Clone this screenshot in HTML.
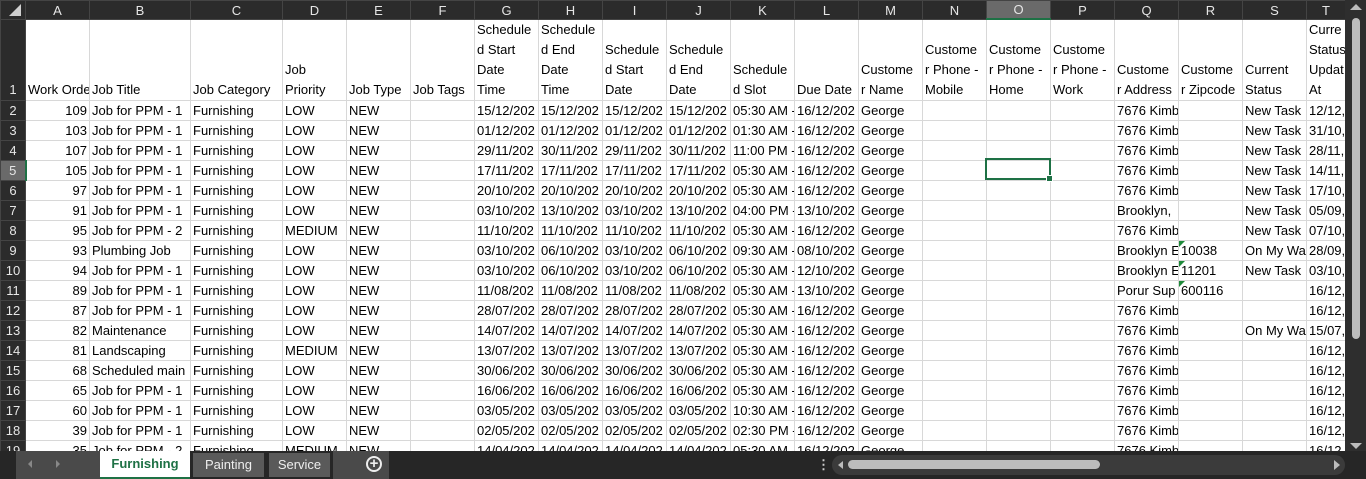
<!DOCTYPE html>
<html><head><meta charset="utf-8"><style>
*{margin:0;padding:0;box-sizing:border-box}
body{width:1366px;height:479px;overflow:hidden;background:#262626;font-family:"Liberation Sans",sans-serif;position:relative}
#grid{position:absolute;left:0;top:0;width:1345px;height:451px;overflow:hidden;background:#fff}
table{border-collapse:collapse;table-layout:fixed;width:1345px}
td{border:1px solid #d8d8d8;height:20px;font-size:13px;line-height:19px;white-space:nowrap;overflow:hidden;padding:0 2px;color:#000;vertical-align:bottom;text-overflow:clip}
td.n{text-align:right}
tr.h td{background:#2b2b2b;color:#e6e6e6;text-align:center;border:1px solid #444;height:18px;line-height:17px;font-size:13px}
td.r{background:#2b2b2b;color:#e6e6e6;text-align:center;border-color:#444;padding:0}
td.sel{background:#6a6a6a!important;}
tr.h td.sel{border-bottom:2px solid #1e7145}
td.r.sel{border-right:2px solid #1e7145}
tr.t td{height:79px;white-space:normal;line-height:20px;vertical-align:bottom}
.g{position:relative}
.g::before{content:"";position:absolute;left:0;top:0;border-top:6px solid #1e8a3a;border-right:6px solid transparent}
#cur{position:absolute;left:985px;top:158px;width:66px;height:22px;border:2px solid #1e7145}
#cur::after{content:"";position:absolute;right:-4px;bottom:-4px;width:5px;height:5px;background:#1e7145;border:1px solid #fff}
#vs{position:absolute;left:1345px;top:0;width:21px;height:451px;background:#2e2e2e}
#vs .th{position:absolute;left:7px;top:18px;width:8px;height:321px;background:#bcbcbc;border-radius:4px}
#bar{position:absolute;left:0;top:451px;width:1366px;height:28px;background:#262626}
</style></head><body>
<div id="grid"><table>
<colgroup><col style="width:25px"><col style="width:64px"><col style="width:101px"><col style="width:92px"><col style="width:64px"><col style="width:64px"><col style="width:64px"><col style="width:64px"><col style="width:64px"><col style="width:64px"><col style="width:64px"><col style="width:64px"><col style="width:64px"><col style="width:64px"><col style="width:64px"><col style="width:64px"><col style="width:64px"><col style="width:64px"><col style="width:64px"><col style="width:64px"><col style="width:39px"></colgroup>
<tr class="h"><td style="position:relative"><svg width="14" height="14" style="position:absolute;right:3px;bottom:2px"><polygon points="13,1 13,13 1,13" fill="#d0d0d0"/></svg></td><td>A</td><td>B</td><td>C</td><td>D</td><td>E</td><td>F</td><td>G</td><td>H</td><td>I</td><td>J</td><td>K</td><td>L</td><td>M</td><td>N</td><td class="sel">O</td><td>P</td><td>Q</td><td>R</td><td>S</td><td>T</td></tr>
<tr class="t"><td class="r">1</td><td style="white-space:nowrap">Work Order</td><td>Job Title</td><td>Job Category</td><td>Job<br>Priority</td><td>Job Type</td><td>Job Tags</td><td>Schedule<br>d Start<br>Date<br>Time</td><td>Schedule<br>d End<br>Date<br>Time</td><td>Schedule<br>d Start<br>Date</td><td>Schedule<br>d End<br>Date</td><td>Schedule<br>d Slot</td><td>Due Date</td><td>Custome<br>r Name</td><td>Custome<br>r Phone -<br>Mobile</td><td>Custome<br>r Phone -<br>Home</td><td>Custome<br>r Phone -<br>Work</td><td>Custome<br>r Address</td><td>Custome<br>r Zipcode</td><td>Current<br>Status</td><td>Curre<br>Status<br>Updat<br>At</td></tr>
<tr><td class="r">2</td><td class="n">109</td><td>Job for PPM - 1</td><td>Furnishing</td><td>LOW</td><td>NEW</td><td></td><td>15/12/202</td><td>15/12/202</td><td>15/12/202</td><td>15/12/202</td><td>05:30 AM -</td><td>16/12/202</td><td>George</td><td></td><td></td><td></td><td>7676 Kimb</td><td></td><td>New Task</td><td>12/12,</td></tr>
<tr><td class="r">3</td><td class="n">103</td><td>Job for PPM - 1</td><td>Furnishing</td><td>LOW</td><td>NEW</td><td></td><td>01/12/202</td><td>01/12/202</td><td>01/12/202</td><td>01/12/202</td><td>01:30 AM -</td><td>16/12/202</td><td>George</td><td></td><td></td><td></td><td>7676 Kimb</td><td></td><td>New Task</td><td>31/10,</td></tr>
<tr><td class="r">4</td><td class="n">107</td><td>Job for PPM - 1</td><td>Furnishing</td><td>LOW</td><td>NEW</td><td></td><td>29/11/202</td><td>30/11/202</td><td>29/11/202</td><td>30/11/202</td><td>11:00 PM -</td><td>16/12/202</td><td>George</td><td></td><td></td><td></td><td>7676 Kimb</td><td></td><td>New Task</td><td>28/11,</td></tr>
<tr><td class="r sel">5</td><td class="n">105</td><td>Job for PPM - 1</td><td>Furnishing</td><td>LOW</td><td>NEW</td><td></td><td>17/11/202</td><td>17/11/202</td><td>17/11/202</td><td>17/11/202</td><td>05:30 AM -</td><td>16/12/202</td><td>George</td><td></td><td></td><td></td><td>7676 Kimb</td><td></td><td>New Task</td><td>14/11,</td></tr>
<tr><td class="r">6</td><td class="n">97</td><td>Job for PPM - 1</td><td>Furnishing</td><td>LOW</td><td>NEW</td><td></td><td>20/10/202</td><td>20/10/202</td><td>20/10/202</td><td>20/10/202</td><td>05:30 AM -</td><td>16/12/202</td><td>George</td><td></td><td></td><td></td><td>7676 Kimb</td><td></td><td>New Task</td><td>17/10,</td></tr>
<tr><td class="r">7</td><td class="n">91</td><td>Job for PPM - 1</td><td>Furnishing</td><td>LOW</td><td>NEW</td><td></td><td>03/10/202</td><td>13/10/202</td><td>03/10/202</td><td>13/10/202</td><td>04:00 PM -</td><td>13/10/202</td><td>George</td><td></td><td></td><td></td><td>Brooklyn,</td><td></td><td>New Task</td><td>05/09,</td></tr>
<tr><td class="r">8</td><td class="n">95</td><td>Job for PPM - 2</td><td>Furnishing</td><td>MEDIUM</td><td>NEW</td><td></td><td>11/10/202</td><td>11/10/202</td><td>11/10/202</td><td>11/10/202</td><td>05:30 AM -</td><td>16/12/202</td><td>George</td><td></td><td></td><td></td><td>7676 Kimb</td><td></td><td>New Task</td><td>07/10,</td></tr>
<tr><td class="r">9</td><td class="n">93</td><td>Plumbing Job</td><td>Furnishing</td><td>LOW</td><td>NEW</td><td></td><td>03/10/202</td><td>06/10/202</td><td>03/10/202</td><td>06/10/202</td><td>09:30 AM -</td><td>08/10/202</td><td>George</td><td></td><td></td><td></td><td>Brooklyn E</td><td class="g">10038</td><td>On My Wa</td><td>28/09,</td></tr>
<tr><td class="r">10</td><td class="n">94</td><td>Job for PPM - 1</td><td>Furnishing</td><td>LOW</td><td>NEW</td><td></td><td>03/10/202</td><td>06/10/202</td><td>03/10/202</td><td>06/10/202</td><td>05:30 AM -</td><td>12/10/202</td><td>George</td><td></td><td></td><td></td><td>Brooklyn E</td><td class="g">11201</td><td>New Task</td><td>03/10,</td></tr>
<tr><td class="r">11</td><td class="n">89</td><td>Job for PPM - 1</td><td>Furnishing</td><td>LOW</td><td>NEW</td><td></td><td>11/08/202</td><td>11/08/202</td><td>11/08/202</td><td>11/08/202</td><td>05:30 AM -</td><td>13/10/202</td><td>George</td><td></td><td></td><td></td><td>Porur Sup</td><td class="g">600116</td><td></td><td>16/12,</td></tr>
<tr><td class="r">12</td><td class="n">87</td><td>Job for PPM - 1</td><td>Furnishing</td><td>LOW</td><td>NEW</td><td></td><td>28/07/202</td><td>28/07/202</td><td>28/07/202</td><td>28/07/202</td><td>05:30 AM -</td><td>16/12/202</td><td>George</td><td></td><td></td><td></td><td>7676 Kimb</td><td></td><td></td><td>16/12,</td></tr>
<tr><td class="r">13</td><td class="n">82</td><td>Maintenance</td><td>Furnishing</td><td>LOW</td><td>NEW</td><td></td><td>14/07/202</td><td>14/07/202</td><td>14/07/202</td><td>14/07/202</td><td>05:30 AM -</td><td>16/12/202</td><td>George</td><td></td><td></td><td></td><td>7676 Kimb</td><td></td><td>On My Wa</td><td>15/07,</td></tr>
<tr><td class="r">14</td><td class="n">81</td><td>Landscaping</td><td>Furnishing</td><td>MEDIUM</td><td>NEW</td><td></td><td>13/07/202</td><td>13/07/202</td><td>13/07/202</td><td>13/07/202</td><td>05:30 AM -</td><td>16/12/202</td><td>George</td><td></td><td></td><td></td><td>7676 Kimb</td><td></td><td></td><td>16/12,</td></tr>
<tr><td class="r">15</td><td class="n">68</td><td>Scheduled main</td><td>Furnishing</td><td>LOW</td><td>NEW</td><td></td><td>30/06/202</td><td>30/06/202</td><td>30/06/202</td><td>30/06/202</td><td>05:30 AM -</td><td>16/12/202</td><td>George</td><td></td><td></td><td></td><td>7676 Kimb</td><td></td><td></td><td>16/12,</td></tr>
<tr><td class="r">16</td><td class="n">65</td><td>Job for PPM - 1</td><td>Furnishing</td><td>LOW</td><td>NEW</td><td></td><td>16/06/202</td><td>16/06/202</td><td>16/06/202</td><td>16/06/202</td><td>05:30 AM -</td><td>16/12/202</td><td>George</td><td></td><td></td><td></td><td>7676 Kimb</td><td></td><td></td><td>16/12,</td></tr>
<tr><td class="r">17</td><td class="n">60</td><td>Job for PPM - 1</td><td>Furnishing</td><td>LOW</td><td>NEW</td><td></td><td>03/05/202</td><td>03/05/202</td><td>03/05/202</td><td>03/05/202</td><td>10:30 AM -</td><td>16/12/202</td><td>George</td><td></td><td></td><td></td><td>7676 Kimb</td><td></td><td></td><td>16/12,</td></tr>
<tr><td class="r">18</td><td class="n">39</td><td>Job for PPM - 1</td><td>Furnishing</td><td>LOW</td><td>NEW</td><td></td><td>02/05/202</td><td>02/05/202</td><td>02/05/202</td><td>02/05/202</td><td>02:30 PM -</td><td>16/12/202</td><td>George</td><td></td><td></td><td></td><td>7676 Kimb</td><td></td><td></td><td>16/12,</td></tr>
<tr><td class="r">19</td><td class="n">35</td><td>Job for PPM - 2</td><td>Furnishing</td><td>MEDIUM</td><td>NEW</td><td></td><td>14/04/202</td><td>14/04/202</td><td>14/04/202</td><td>14/04/202</td><td>05:30 AM -</td><td>16/12/202</td><td>George</td><td></td><td></td><td></td><td>7676 Kimb</td><td></td><td></td><td>16/12,</td></tr>
</table>
<div id="cur"></div>
</div>
<div id="vs"><div style="position:absolute;left:5px;top:4px;border-left:6px solid transparent;border-right:6px solid transparent;border-bottom:6px solid #bcbcbc"></div><div class="th"></div><div style="position:absolute;left:5px;top:443px;border-left:6px solid transparent;border-right:6px solid transparent;border-top:6px solid #bcbcbc"></div></div>
<div id="bar">
<div style="position:absolute;left:16px;top:0;width:84px;height:28px;background:#4a4a4a"></div>
<div style="position:absolute;left:28px;top:9px;border-top:4px solid transparent;border-bottom:4px solid transparent;border-right:4px solid #888"></div>
<div style="position:absolute;left:56px;top:9px;border-top:4px solid transparent;border-bottom:4px solid transparent;border-left:4px solid #888"></div>
<div style="position:absolute;left:100px;top:0;width:90px;height:28px;background:#fff;border-bottom:2px solid #1e7145;color:#1e7145;font-weight:bold;font-size:13px;text-align:center;line-height:26px">Furnishing</div>
<div style="position:absolute;left:193px;top:2px;width:71px;height:24px;background:#5a5a5a;color:#eee;font-size:13px;text-align:center;line-height:23px">Painting</div>
<div style="position:absolute;left:269px;top:2px;width:61px;height:24px;background:#5a5a5a;color:#eee;font-size:13px;text-align:center;line-height:23px">Service</div>
<div style="position:absolute;left:333px;top:0;width:56px;height:28px;background:#4a4a4a"></div>
<div style="position:absolute;left:366px;top:5px;width:16px;height:16px;border:2px solid #eee;border-radius:50%;color:#eee;font-size:15px;line-height:12px;text-align:center;font-weight:bold">+</div>
<div style="position:absolute;left:817px;top:7px;color:#ccc;font-size:13px;font-weight:bold;line-height:14px">⋮</div>
<div style="position:absolute;left:832px;top:4px;width:513px;height:20px;background:#3b3b3b;border-radius:10px"></div>
<div style="position:absolute;left:838px;top:10px;border-top:4px solid transparent;border-bottom:4px solid transparent;border-right:5px solid #bcbcbc"></div>
<div style="position:absolute;left:848px;top:9px;width:252px;height:9px;background:#bcbcbc;border-radius:5px"></div>
<div style="position:absolute;left:1334px;top:9px;border-top:5px solid transparent;border-bottom:5px solid transparent;border-left:6px solid #bcbcbc"></div>
</div>
</body></html>
